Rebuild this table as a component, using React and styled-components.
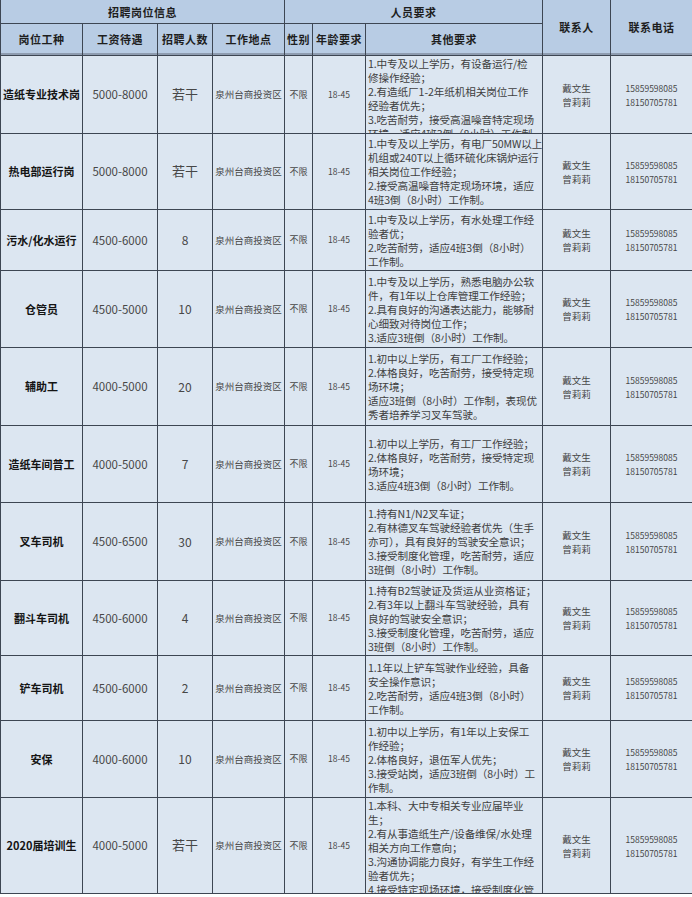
import React from "react";
import styled, { createGlobalStyle } from "styled-components";

const GlobalStyle = createGlobalStyle`
  html, body {
    margin: 0;
    padding: 0;
    background: #ffffff;
  }
  body {
    overflow: hidden;
  }
`;

const FONT = `"Noto Sans CJK SC", "Noto Sans", sans-serif`;

const CONTACTS = ["戴文生", "曾莉莉"];
const PHONES = ["15859598085", "18150705781"];

const jobs = [
  {
    title: "造纸专业技术岗",
    pay: "5000-8000",
    count: "若干",
    h: 77,
    notes: [
      "1.中专及以上学历，有设备运行/检",
      "修操作经验；",
      "2.有造纸厂1-2年纸机相关岗位工作",
      "经验者优先；",
      "3.吃苦耐劳，接受高温噪音特定现场",
      "环境，适应4班3倒（8小时）工作制。",
    ],
  },
  {
    title: "热电部运行岗",
    pay: "5000-8000",
    count: "若干",
    h: 75,
    notes: [
      "1.中专及以上学历，有电厂50MW以上",
      "机组或240T以上循环硫化床锅炉运行",
      "相关岗位工作经验；",
      "2.接受高温噪音特定现场环境，适应",
      "4班3倒（8小时）工作制。",
    ],
  },
  {
    title: "污水/化水运行",
    pay: "4500-6000",
    count: "8",
    h: 60,
    notes: [
      "1.中专及以上学历，有水处理工作经",
      "验者优；",
      "2.吃苦耐劳，适应4班3倒（8小时）",
      "工作制。",
    ],
  },
  {
    title: "仓管员",
    pay: "4500-5000",
    count: "10",
    h: 76,
    notes: [
      "1.中专及以上学历，熟悉电脑办公软",
      "件，有1年以上仓库管理工作经验；",
      "2.具有良好的沟通表达能力，能够耐",
      "心细致对待岗位工作；",
      "3.适应3班倒（8小时）工作制。",
    ],
  },
  {
    title: "辅助工",
    pay: "4000-5000",
    count: "20",
    h: 77,
    notes: [
      "1.初中以上学历，有工厂工作经验；",
      "2.体格良好，吃苦耐劳，接受特定现",
      "场环境；",
      "适应3班倒（8小时）工作制，表现优",
      "秀者培养学习叉车驾驶。",
    ],
  },
  {
    title: "造纸车间普工",
    pay: "4000-5000",
    count: "7",
    h: 76,
    notes: [
      "1.初中以上学历，有工厂工作经验；",
      "2.体格良好，吃苦耐劳，接受特定现",
      "场环境；",
      "3.适应4班3倒（8小时）工作制。",
    ],
  },
  {
    title: "叉车司机",
    pay: "4500-6500",
    count: "30",
    h: 77,
    notes: [
      "1.持有N1/N2叉车证；",
      "2.有林德叉车驾驶经验者优先（生手",
      "亦可），具有良好的驾驶安全意识；",
      "3.接受制度化管理，吃苦耐劳，适应",
      "3班倒（8小时）工作制。",
    ],
  },
  {
    title: "翻斗车司机",
    pay: "4500-6000",
    count: "4",
    h: 74,
    notes: [
      "1.持有B2驾驶证及货运从业资格证；",
      "2.有3年以上翻斗车驾驶经验，具有",
      "良好的驾驶安全意识；",
      "3.接受制度化管理，吃苦耐劳，适应",
      "3班倒（8小时）工作制。",
    ],
  },
  {
    title: "铲车司机",
    pay: "4500-6000",
    count: "2",
    h: 64,
    notes: [
      "1.1年以上铲车驾驶作业经验，具备",
      "安全操作意识；",
      "2.吃苦耐劳，适应4班3倒（8小时）",
      "工作制。",
    ],
  },
  {
    title: "安保",
    pay: "4000-6000",
    count: "10",
    h: 76,
    notes: [
      "1.初中以上学历，有1年以上安保工",
      "作经验；",
      "2.体格良好，退伍军人优先；",
      "3.接受站岗，适应3班倒（8小时）工",
      "作制。",
    ],
  },
  {
    title: "2020届培训生",
    pay: "4000-5000",
    count: "若干",
    h: 95,
    notes: [
      "1.本科、大中专相关专业应届毕业",
      "生；",
      "2.有从事造纸生产/设备维保/水处理",
      "相关方向工作意向；",
      "3.沟通协调能力良好，有学生工作经",
      "验者优先；",
      "4.接受特定现场环境，接受制度化管",
    ],
  },
];

const Sheet = styled.div`
  display: grid;
  grid-template-columns: 81px 74px 54px 71px 27px 52px 176px 67px 81px;
  grid-template-rows: 23px 31px ${(p) => p.$rows};
  gap: 1px;
  padding: 0 0 1px 1px;
  width: max-content;
  background: #3d4653;
  font-family: ${FONT};
`;

const HeadCell = styled.div`
  grid-column: ${(p) => p.$col};
  grid-row: ${(p) => p.$row};
  display: flex;
  align-items: center;
  justify-content: center;
  background: #b8cce4;
  border-bottom: ${(p) => (p.$rule ? "2px solid #8e9cb0" : "none")};
  font-size: 11px;
  font-weight: 700;
  color: #1e1e1e;
  letter-spacing: 0.5px;
  white-space: nowrap;
`;

const Cell = styled.div`
  display: flex;
  flex-direction: column;
  align-items: center;
  justify-content: center;
  background: #dce6f1;
  font-size: ${(p) => p.$size}px;
  font-weight: ${(p) => (p.$bold ? 700 : 400)};
  color: ${(p) => (p.$bold ? "#141414" : "#474747")};
  line-height: ${(p) => p.$lh || "1.3"};
  white-space: nowrap;
  overflow: hidden;
`;

/* Excel-like: centred vertically, but top-aligned when the text overflows */
const Notes = styled.div`
  display: flex;
  flex-direction: column;
  justify-content: safe center;
  background: #dce6f1;
  padding: 1px 0 0 2px;
  font-size: 10.6px;
  line-height: 14px;
  letter-spacing: -0.1px;
  color: #404040;
  white-space: nowrap;
  overflow: hidden;
`;

const NoteLine = styled.div`
  flex: none;
  height: 14px;
`;

function JobRow({ job }) {
  return (
    <>
      <Cell $size={11} $bold>
        {job.title}
      </Cell>
      <Cell $size={11.5}>{job.pay}</Cell>
      <Cell $size={job.count === "若干" ? 13 : 12}>{job.count}</Cell>
      <Cell $size={9.5}>泉州台商投资区</Cell>
      <Cell $size={9}>不限</Cell>
      <Cell $size={8.5}>18-45</Cell>
      <Notes>
        {job.notes.map((line, i) => (
          <NoteLine key={i}>{line}</NoteLine>
        ))}
      </Notes>
      <Cell $size={9.5} $lh="14px">
        {CONTACTS.map((name) => (
          <span key={name}>{name}</span>
        ))}
      </Cell>
      <Cell $size={8.5} $lh="14px">
        {PHONES.map((tel) => (
          <span key={tel}>{tel}</span>
        ))}
      </Cell>
    </>
  );
}

export default function App() {
  const rows = jobs.map((j) => `${j.h}px`).join(" ");
  return (
    <>
      <GlobalStyle />
      <Sheet $rows={rows}>
        <HeadCell $col="1 / 5" $row="1">
          招聘岗位信息
        </HeadCell>
        <HeadCell $col="5 / 8" $row="1">
          人员要求
        </HeadCell>
        <HeadCell $col="8" $row="1 / 3" $rule>
          联系人
        </HeadCell>
        <HeadCell $col="9" $row="1 / 3" $rule>
          联系电话
        </HeadCell>
        {["岗位工种", "工资待遇", "招聘人数", "工作地点", "性别", "年龄要求", "其他要求"].map(
          (label, i) => (
            <HeadCell key={label} $col={String(i + 1)} $row="2" $rule>
              {label}
            </HeadCell>
          )
        )}
        {jobs.map((job) => (
          <JobRow key={job.title} job={job} />
        ))}
      </Sheet>
    </>
  );
}
